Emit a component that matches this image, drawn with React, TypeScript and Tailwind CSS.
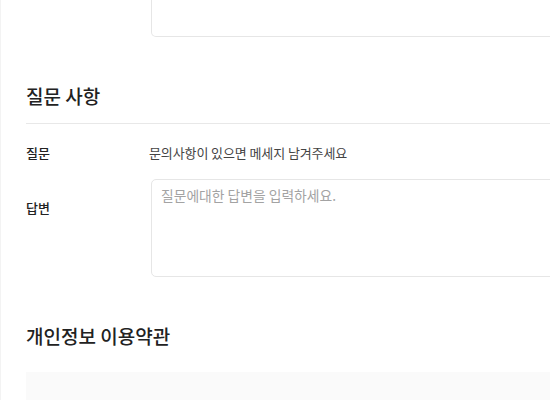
import React from "react";

const font = { fontFamily: '"Noto Sans CJK KR", "Noto Sans", sans-serif' };

export default function App() {
  return (
    <div className="w-[550px] h-[400px] overflow-hidden bg-white border-l border-[#f3f3f3]" style={font}>
      <div className="w-[760px] pl-[25px]">
        <div className="flex">
          <div className="w-[125px] shrink-0" />
          <div className="flex-1 h-[37px] border-x border-b border-[#e6e6e6] rounded-b-[5px]" />
        </div>

        <h2 className="mt-[46px] text-[19px] leading-[26px] font-medium text-[#222]">질문 사항</h2>
        <div className="mt-[14px] h-px bg-[#e8e8e8]" />

        <div className="flex items-center mt-[20px] h-[18px] text-[13px]">
          <div className="w-[123px] shrink-0 font-medium text-[#222]">질문</div>
          <div className="text-[#444] tracking-[-0.1px]">문의사항이 있으면 메세지 남겨주세요</div>
        </div>

        <div className="flex mt-[17px]">
          <div className="w-[125px] shrink-0 pt-[20px] text-[13px] leading-[18px] font-medium text-[#222]">답변</div>
          <textarea
            className="flex-1 h-[98px] resize-none border border-[#e6e6e6] rounded-[5px] px-[9px] pt-[5px] text-[13.8px] leading-[20px] outline-none placeholder:text-[#a3a3a3]"
            style={font}
            placeholder="질문에대한 답변을 입력하세요."
          />
        </div>

        <h2 className="mt-[46px] text-[19px] leading-[26px] font-medium text-[#222]">개인정보 이용약관</h2>
        <div className="mt-[23px] h-[120px] bg-[#fafafa]" />
      </div>
    </div>
  );
}
